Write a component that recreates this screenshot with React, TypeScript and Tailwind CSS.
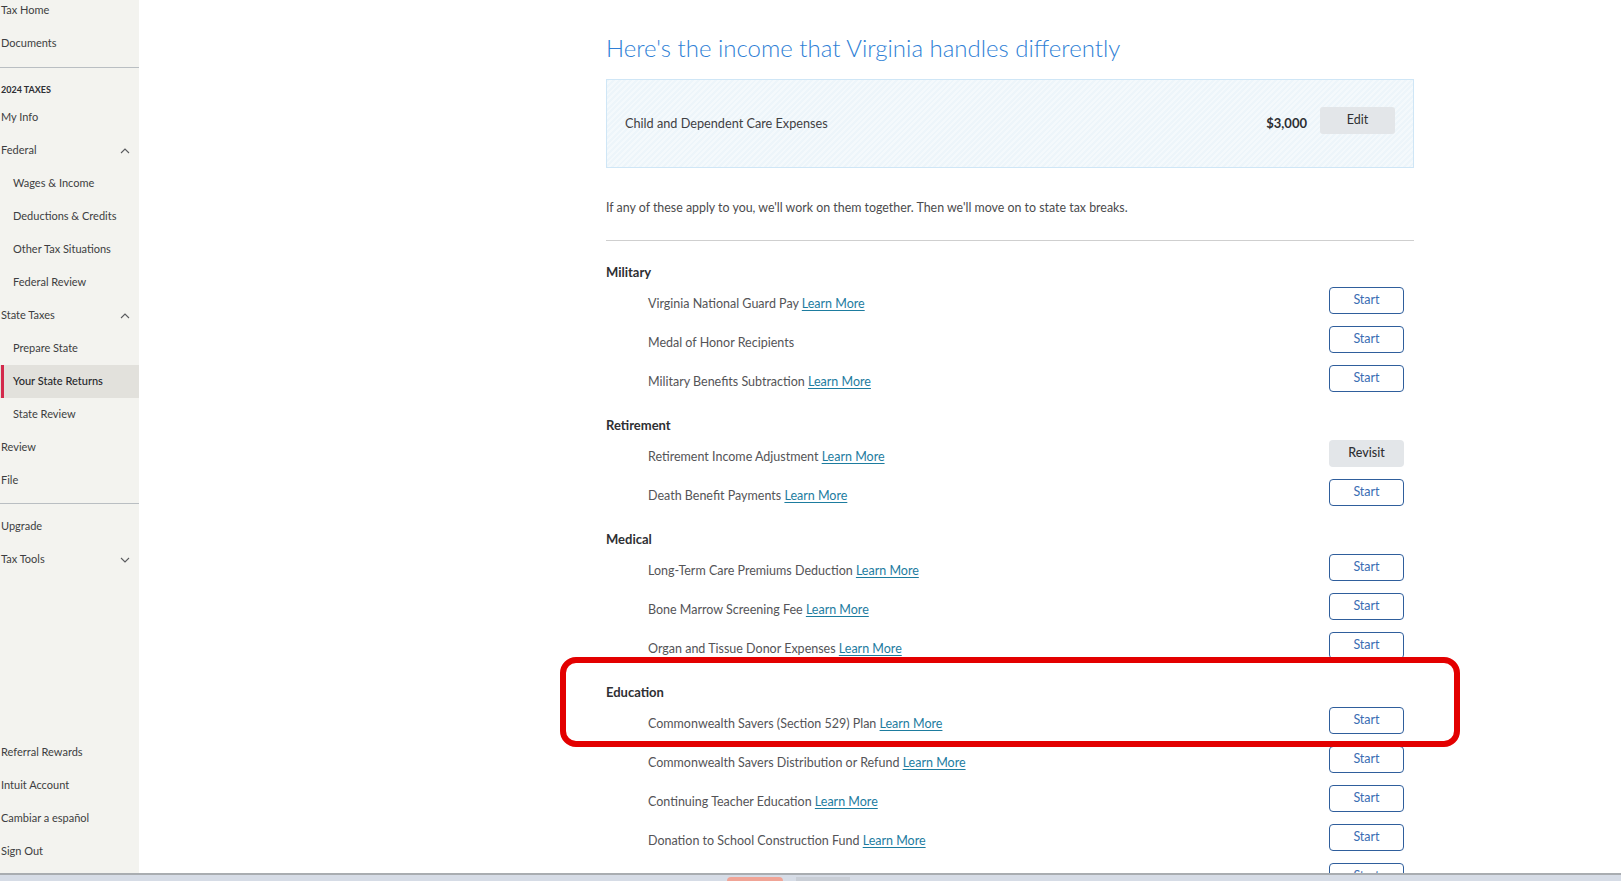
type Item = { label: string; learn?: boolean; action?: "Start" | "Revisit"; noText?: boolean };
type Section = { title: string; items: Item[] };

const sections: Section[] = [
  {
    title: "Military",
    items: [
      { label: "Virginia National Guard Pay", learn: true },
      { label: "Medal of Honor Recipients" },
      { label: "Military Benefits Subtraction", learn: true },
    ],
  },
  {
    title: "Retirement",
    items: [
      { label: "Retirement Income Adjustment", learn: true, action: "Revisit" },
      { label: "Death Benefit Payments", learn: true },
    ],
  },
  {
    title: "Medical",
    items: [
      { label: "Long-Term Care Premiums Deduction", learn: true },
      { label: "Bone Marrow Screening Fee", learn: true },
      { label: "Organ and Tissue Donor Expenses", learn: true },
    ],
  },
  {
    title: "Education",
    items: [
      { label: "Commonwealth Savers (Section 529) Plan", learn: true },
      { label: "Commonwealth Savers Distribution or Refund", learn: true },
      { label: "Continuing Teacher Education", learn: true },
      { label: "Donation to School Construction Fund", learn: true },
      { label: "", noText: true },
    ],
  },
];

const Chevron = ({ up }: { up: boolean }) => (
  <svg width="10" height="6" viewBox="0 0 10 6" className="mr-[9px]">
    <polyline
      points={up ? "1,5 5,1 9,5" : "1,1 5,5 9,1"}
      fill="none"
      stroke="#5a5b5e"
      strokeWidth="1.1"
    />
  </svg>
);

const NavRow = ({
  label,
  sub,
  chevron,
  active,
}: {
  label: string;
  sub?: boolean;
  chevron?: "up" | "down";
  active?: boolean;
}) => (
  <div
    className={`relative flex h-[33px] shrink-0 items-center justify-between text-[11px] text-[#3d3e41] ${
      sub ? "pl-[13px]" : "pl-[1px]"
    } ${active ? "bg-[#e2e1dc] font-medium text-[#25262a]" : ""}`}
  >
    {active && <div className="absolute left-[1px] top-0 h-full w-[3px] bg-[#d3294b]" />}
    <span>{label}</span>
    {chevron && <Chevron up={chevron === "up"} />}
  </div>
);

const Sidebar = () => (
  <div className="flex h-full w-[139px] shrink-0 flex-col bg-[#f3f3ef]">
    <div className="mt-[-6px]">
      <NavRow label="Tax Home" />
      <NavRow label="Documents" />
    </div>
    <div className="mt-[7px] h-px bg-[#b9bec2]" />
    <div className="h-[33px] pl-[1px] pt-[16px] text-[9px] font-bold leading-[12px] text-[#2e2f33]">2024 TAXES</div>
    <NavRow label="My Info" />
    <NavRow label="Federal" chevron="up" />
    <NavRow label="Wages & Income" sub />
    <NavRow label="Deductions & Credits" sub />
    <NavRow label="Other Tax Situations" sub />
    <NavRow label="Federal Review" sub />
    <NavRow label="State Taxes" chevron="up" />
    <NavRow label="Prepare State" sub />
    <NavRow label="Your State Returns" sub active />
    <NavRow label="State Review" sub />
    <NavRow label="Review" />
    <NavRow label="File" />
    <div className="mt-[6px] h-px bg-[#b9bec2]" />
    <div className="h-[6px]" />
    <NavRow label="Upgrade" />
    <NavRow label="Tax Tools" chevron="down" />
    <div className="flex-1" />
    <div className="pb-[5px]">
      <NavRow label="Referral Rewards" />
      <NavRow label="Intuit Account" />
      <NavRow label="Cambiar a español" />
      <NavRow label="Sign Out" />
    </div>
  </div>
);

const Row = ({ item }: { item: Item }) => (
  <div className="flex h-[39px] shrink-0 items-start justify-between">
    <div className="pl-[42px] pt-[6px] text-[12.5px] leading-[21px] text-[#545457]">
      {!item.noText && (
        <>
          {item.label}{" "}
          {item.learn && <span className="text-[#1d7c9f] underline underline-offset-2">Learn More</span>}
        </>
      )}
    </div>
    {item.action === "Revisit" ? (
      <button className="mr-[10px] h-[27px] w-[75px] rounded-[4px] bg-[#e3e6e9] text-[12.5px] font-medium text-[#2f3033]">
        Revisit
      </button>
    ) : (
      <button className="mr-[10px] h-[27px] w-[75px] rounded-[4px] border border-[#2f5e9c] bg-white text-[12.5px] text-[#3a6db3]">
        Start
      </button>
    )}
  </div>
);

export default function App() {
  return (
    <div
      className="relative flex h-[881px] w-[1621px] flex-col overflow-hidden bg-white"
      style={{ fontFamily: "Lato, 'Noto Sans', sans-serif" }}
    >
      <div className="flex h-[873px] overflow-hidden">
        <Sidebar />
        <main className="flex-1 overflow-hidden pl-[467px]">
          <div className="w-[808px]">
            <h1 className="pt-[34px] text-[24px] font-light leading-[28px] text-[#2f7fd6]">
              Here's the income that Virginia handles differently
            </h1>
            <div className="mt-[17px] flex h-[89px] items-center border border-[#cfe6f6] bg-[repeating-linear-gradient(135deg,#edf5fa_0px,#edf5fa_2px,#f4f9fc_2px,#f4f9fc_4px)] pl-[18px] pr-[18px]">
              <span className="flex-1 text-[12.7px] text-[#3f4043]">Child and Dependent Care Expenses</span>
              <span className="text-[13px] font-bold text-[#2e2f33]">$3,000</span>
              <button className="mb-[6px] ml-[13px] h-[27px] w-[75px] rounded-[3px] bg-[#e3e6e9] text-[12.5px] text-[#2f3033]">
                Edit
              </button>
            </div>
            <p className="mt-[30px] text-[12.4px] leading-[20px] text-[#4b4b4d]">
              If any of these apply to you, we'll work on them together. Then we'll move on to state tax breaks.
            </p>
            <div className="mt-[22px] h-px bg-[#cfcfcf]" />
            <div className="pt-[10px]">
              {sections.map((s) => (
                <div key={s.title} className="mt-[11px] first:mt-[11px]">
                  <div className="text-[13px] font-bold leading-[20px] text-[#2e2f33]">{s.title}</div>
                  <div className="mt-[5px] flex flex-col">
                    {s.items.map((it, i) => (
                      <Row key={i} item={it} />
                    ))}
                  </div>
                </div>
              ))}
            </div>
          </div>
        </main>
      </div>
      <div className="h-[2px] bg-[#a9adb1]" />
      <div className="flex h-[6px] items-end bg-[#d6dce6]">
        <div className="ml-[727px] h-[4px] w-[56px] rounded-t-[4px] bg-[#f0a496]" />
        <div className="ml-[13px] h-[4px] w-[54px] bg-[#c9ced6]" />
      </div>
      <div className="pointer-events-none absolute left-[560px] top-[657px] h-[90px] w-[900px] rounded-[16px] border-[6px] border-[#e30000]" />
    </div>
  );
}
